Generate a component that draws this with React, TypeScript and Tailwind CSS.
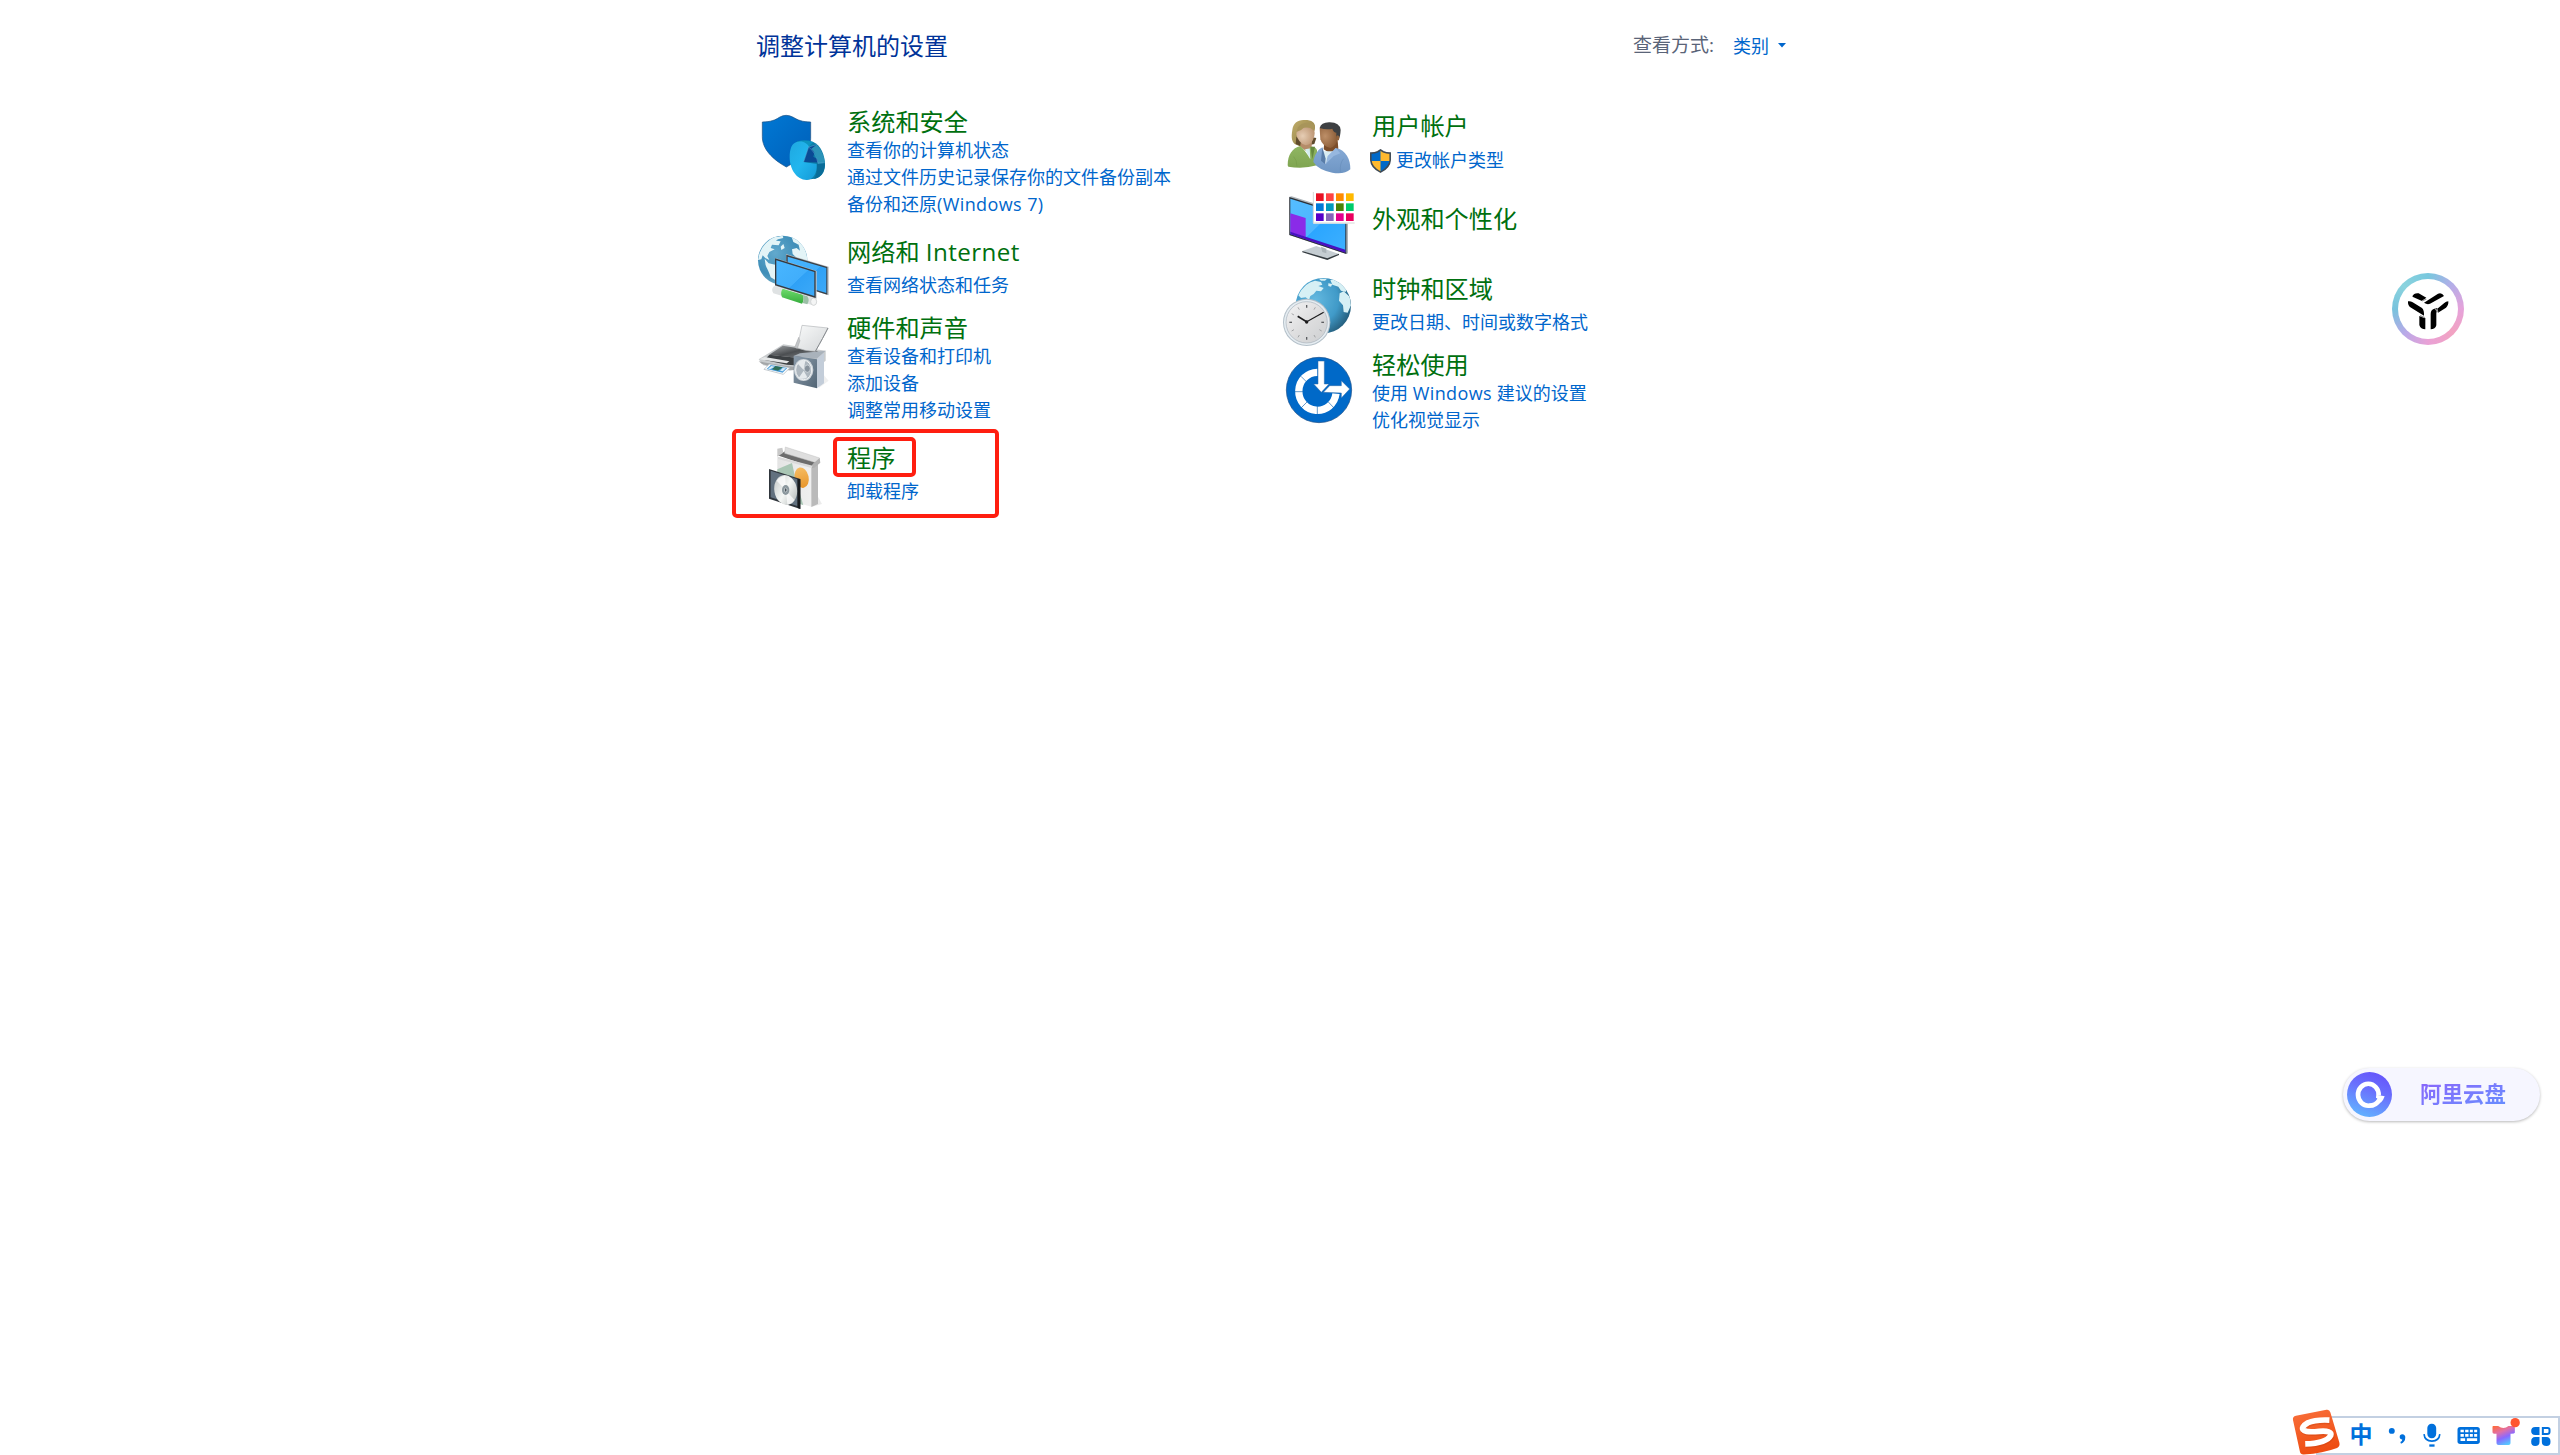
import type { ReactNode } from "react";

type IconProps = { y: number; className: string; children: ReactNode };

function Icon({ y, className, children }: IconProps) {
  return (
    <svg viewBox={`0 ${y} 270 216`} className={"h-[72px] w-[90px] shrink-0 overflow-visible " + className}>
      {children}
    </svg>
  );
}

const SecurityIcon = () => (
  <Icon y={36} className="mt-1">
    <defs>
      <linearGradient id="sh" x1="0" y1="0" x2="1" y2="1">
        <stop offset="0" stopColor="#0078d4" />
        <stop offset="1" stopColor="#005fb8" />
      </linearGradient>
      <linearGradient id="pie" x1="0" y1="0" x2="1" y2="1">
        <stop offset="0" stopColor="#1fa8e0" />
        <stop offset="0.5" stopColor="#22b6ee" />
        <stop offset="1" stopColor="#1499d6" />
      </linearGradient>
    </defs>
    <path d="M37 66C62 66 76 60 88 52Q108 40 130 52C143 60 157 66 182 66V116C182 152 150 178 109 201C68 178 37 148 37 110Z" fill="url(#sh)" stroke="#1d4f80" strokeWidth="2" />
    <path d="M140 125Q165 118 190 126C212 136 225 165 225 196C224 218 213 233 195 236L168 239L150 200Z" fill="#0d7fa8" />
    <path d="M140 125Q165 118 190 126L176 140Z" fill="#0c93c0" />
    <path d="M200 192L225 190C224 218 213 233 192 237C200 225 202 210 200 192Z" fill="#0a6c98" />
    <path d="M140 126C158 120 172 130 177 140L161 186L200 192C202 220 190 239 170 240C140 240 119 208 119 172C119 145 126 130 140 126Z" fill="url(#pie)" />
    <path d="M176 141L200 134L190 170L221 188L161 186Z" fill="#0a4a94" />
    <path d="M200 134Q220 155 225 188L204 190Q200 160 184 146Z" fill="#2b93b8" />
    <path d="M176 141Q198 158 204 190L221 188M161 186L176 141L200 134" fill="none" stroke="#5fa4d0" strokeWidth="1.5" />
  </Icon>
);

const NetworkIcon = () => (
  <Icon y={402} className="-mt-1">
    <defs>
      <radialGradient id="gl" cx="0.35" cy="0.35" r="0.75">
        <stop offset="0" stopColor="#62a9cd" />
        <stop offset="0.6" stopColor="#3f8eb8" />
        <stop offset="1" stopColor="#7eb4cb" />
      </radialGradient>
      <linearGradient id="scr" x1="0" y1="0" x2="1" y2="1">
        <stop offset="0" stopColor="#48b6ff" />
        <stop offset="0.55" stopColor="#41aefb" />
        <stop offset="0.56" stopColor="#2fa1f6" />
        <stop offset="1" stopColor="#3ca9f8" />
      </linearGradient>
      <linearGradient id="grn" x1="0" y1="0" x2="0" y2="1">
        <stop offset="0" stopColor="#6fdc6c" />
        <stop offset="1" stopColor="#35ac3c" />
      </linearGradient>
      <clipPath id="gc"><circle cx="98" cy="481" r="74" /></clipPath>
    </defs>
    <circle cx="98" cy="481" r="74" fill="url(#gl)" />
    <g clipPath="url(#gc)" fill="#e3f4f7">
      <path d="M28 462C40 430 60 416 78 410L88 414L78 422L92 424L86 436L66 434L62 444L74 448L58 456L52 468L58 480L46 474L38 466L34 478L24 480Z" />
      <path d="M66 414L98 407L100 414L84 418Z" />
      <path d="M124 408C150 418 172 446 172 484L140 474L128 462L126 448L140 444L150 452L146 434L130 426Z" />
      <path d="M44 476L56 490L76 494V540L62 532C56 510 46 500 46 490Z" />
      <path d="M92 440L100 432L104 444L94 450Z" />
    </g>
    <path d="M108 462L236 500V586L108 546Z" fill="#b7bcc0" />
    <path d="M109 464L232 501V584L109 545Z" fill="#3b4046" />
    <path d="M113 470L229 504V579L113 544Z" fill="url(#scr)" />
    <g>
      <path d="M72 558L184 592Q200 596 201 606Q199 618 188 616L70 580Q62 568 72 558Z" fill="#dfe2e3" />
      <path d="M98 566L158 584Q164 598 156 611L96 592Q90 578 98 566Z" fill="url(#grn)" />
      <path d="M158 585L172 589Q180 600 172 613L158 609Q164 598 158 585Z" fill="#9bbfa6" />
      <ellipse cx="191" cy="605" rx="9" ry="11" fill="#f4f5f5" stroke="#c8cbcc" strokeWidth="2" />
    </g>
    <path d="M75 474L200 513V596L75 558Z" fill="#c4c8cb" />
    <path d="M75 475L197 513V594L75 556Z" fill="#353a40" />
    <path d="M79 481L193 516V588L79 553Z" fill="url(#scr)" />
  </Icon>
);

const PrinterIcon = () => (
  <Icon y={30} className="mt-1.5">
    <defs>
      <linearGradient id="pp" x1="0" y1="0" x2="1" y2="1">
        <stop offset="0" stopColor="#f9fafa" />
        <stop offset="1" stopColor="#d3d6d8" />
      </linearGradient>
      <linearGradient id="pt" x1="0" y1="0" x2="1" y2="1">
        <stop offset="0" stopColor="#a3a6a9" />
        <stop offset="0.5" stopColor="#4b4e51" />
        <stop offset="1" stopColor="#8a8c8f" />
      </linearGradient>
      <linearGradient id="spk" x1="0" y1="0" x2="1" y2="1">
        <stop offset="0" stopColor="#8c9cab" />
        <stop offset="1" stopColor="#526575" />
      </linearGradient>
    </defs>
    <path d="M26 148L100 103L227 122V152L210 166L120 182L40 166Z" fill="#c9ccce" />
    <path d="M98 107L206 124L146 144L58 134Z" fill="url(#pt)" />
    <path d="M58 134L146 144L134 166L110 164L44 150Z" fill="#3c4043" />
    <path d="M28 148L44 141L118 154L110 160Z" fill="#e4e6e7" />
    <path d="M26 154L48 158L110 168L132 170V180L104 180L36 162Z" fill="#a4a7a9" />
    <path d="M58 162L120 173L100 193L42 178Z" fill="#fff" stroke="#a8b2ba" strokeWidth="2" />
    <path d="M62 165L112 174L98 188L50 177Z" fill="#4f9fdc" />
    <path d="M76 168L98 172L84 182L66 178Z" fill="#2f6f58" />
    <path d="M64 168L74 170L60 178L54 176ZM98 174L108 175L98 184L90 182Z" fill="#d6ecf8" />
    <path d="M156 46L234 54Q220 82 196 124Q166 124 136 112Q152 80 156 46Z" fill="url(#pp)" stroke="#b4b7ba" strokeWidth="2" />
    <path d="M234 54Q220 82 196 124" fill="none" stroke="#85898d" strokeWidth="3" />
    <path d="M146 82L134 112L142 116L150 92Z" fill="#c2c5c8" stroke="#999" />
    <path d="M206 235L236 212L222 196Z" fill="#000" opacity="0.06" />
    <path d="M131 138L150 130L227 122L200 146Z" fill="#a9b2bb" />
    <path d="M201 146L222 128V220L201 235Z" fill="#c3cdd9" />
    <path d="M131 137L201 148V235L131 218Z" fill="url(#spk)" />
    <ellipse cx="161" cy="180" rx="29" ry="33" fill="#cfd5da" />
    <ellipse cx="161" cy="180" rx="24" ry="29" fill="#aeb7bf" stroke="#eef1f3" strokeWidth="3" />
    <path d="M161 180L142 160Q152 148 166 152Z M161 182L146 204Q160 210 172 202Z" fill="#e6eaed" />
    <ellipse cx="172" cy="176" rx="9" ry="11" fill="#87929c" stroke="#dfe4e8" strokeWidth="2" />
  </Icon>
);

const ProgramsIcon = () => (
  <Icon y={402} className="">
    <defs>
      <linearGradient id="bx" x1="0" y1="0" x2="1" y2="0">
        <stop offset="0" stopColor="#e4e4e4" />
        <stop offset="1" stopColor="#f0f0f0" />
      </linearGradient>
      <linearGradient id="cdc" x1="0" y1="0" x2="1" y2="1">
        <stop offset="0" stopColor="#bfc4c4" />
        <stop offset="0.5" stopColor="#f5f7f5" />
        <stop offset="1" stopColor="#aab0b0" />
      </linearGradient>
      <linearGradient id="org" x1="0" y1="0" x2="0" y2="1">
        <stop offset="0" stopColor="#f6bc62" />
        <stop offset="1" stopColor="#e8962c" />
      </linearGradient>
    </defs>
    <path d="M186 590L216 582L204 560Z" fill="#000" opacity="0.08" />
    <path d="M82 440L190 470L184 590L82 560Z" fill="url(#bx)" />
    <path d="M184 470L204 462V582L184 591Z" fill="#bababa" />
    <path d="M82 436L106 424L208 460L188 472Z" fill="#6c6c6c" />
    <path d="M82 416L97 413L100 428L82 440Z" fill="#c8c8c8" />
    <path d="M106 411L209 444L198 458L104 430Z" fill="#dedede" stroke="#c2c2c2" strokeWidth="1.5" />
    <path d="M188 462L209 444L211 458L192 474L184 471Z" fill="#b0b0b0" />
    <path d="M84 440L188 467L184 474L84 447Z" fill="#dadada" />
    <path d="M82 478L126 459L136 504L160 586L120 570L82 530Z" fill="#a9c6b4" />
    <ellipse cx="155" cy="503" rx="21" ry="31" fill="url(#org)" transform="rotate(-12 155 503)" />
    <path d="M57 477L151 507V597L57 566Z" fill="#30363c" />
    <path d="M62 482L142 508V588L62 562Z" fill="#62717f" />
    <path d="M143 506L151 508V597L143 594Z" fill="#181b1e" />
    <ellipse cx="107" cy="540" rx="34" ry="45" fill="url(#cdc)" transform="rotate(-10 107 540)" />
    <path d="M107 540L80 512Q90 498 106 498Z M108 542L134 570Q126 582 112 584Z" fill="#fff" opacity="0.7" />
    <ellipse cx="107" cy="540" rx="11" ry="15" fill="#8b979d" />
    <ellipse cx="107" cy="540" rx="4" ry="6" fill="#48525a" stroke="#e3e8e8" strokeWidth="2" />
  </Icon>
);

const UsersIcon = () => (
  <Icon y={36} className="">
    <defs>
      <linearGradient id="hair" x1="0" y1="0" x2="1" y2="1">
        <stop offset="0" stopColor="#c0ad6a" />
        <stop offset="1" stopColor="#8b7a42" />
      </linearGradient>
      <radialGradient id="fa" cx="0.35" cy="0.5" r="0.7">
        <stop offset="0" stopColor="#e6cdb4" />
        <stop offset="1" stopColor="#bb9370" />
      </radialGradient>
      <radialGradient id="fb" cx="0.3" cy="0.45" r="0.8">
        <stop offset="0" stopColor="#bd8f68" />
        <stop offset="1" stopColor="#80512c" />
      </radialGradient>
      <linearGradient id="ga" x1="0" y1="0" x2="0" y2="1">
        <stop offset="0" stopColor="#90b662" />
        <stop offset="1" stopColor="#7fa551" />
      </linearGradient>
      <linearGradient id="bl" x1="0" y1="0" x2="0" y2="1">
        <stop offset="0" stopColor="#86aad6" />
        <stop offset="1" stopColor="#6f96c4" />
      </linearGradient>
    </defs>
    <path d="M64 134C50 130 48 112 52 90C54 68 70 58 90 60C110 60 122 68 120 84L116 100L78 140Z" fill="url(#hair)" />
    <path d="M64 110L80 120L76 138L62 132Z" fill="#5f4b2d" />
    <path d="M112 112L124 114L118 132L108 134Z" fill="#5f4b2d" />
    <path d="M78 120L110 124V146L92 152L76 140Z" fill="#b58c68" />
    <path d="M66 86L106 80Q122 84 118 108Q112 134 92 136Q70 128 64 104Z" fill="url(#fa)" />
    <path d="M64 96Q80 92 88 82Q104 80 118 92L120 78Q104 62 80 72Q66 80 64 96Z" fill="#a8955a" />
    <path d="M90 148L112 144V176L106 178Z" fill="#d5eef0" />
    <path d="M38 196C38 164 52 144 76 138Q90 150 106 178L104 142Q118 136 126 150V196Q84 208 40 200Z" fill="url(#ga)" />
    <path d="M106 140L112 178L116 160L120 140Z" fill="#66893f" />
    <path d="M148 126L188 122L190 146L168 162L146 148Z" fill="#7c4e2b" />
    <path d="M134 84Q160 74 186 88L190 112Q184 140 166 144Q142 138 136 118Z" fill="url(#fb)" />
    <path d="M134 84Q138 68 162 67Q194 66 197 90Q196 112 190 120L184 116V98Q176 98 172 86Q154 90 134 84Z" fill="#3e4042" />
    <ellipse cx="188" cy="114" rx="5" ry="8" fill="#91623b" />
    <path d="M144 154L176 154L150 188Z" fill="#d8edf3" />
    <path d="M115 186C118 164 130 148 142 142L152 192L182 144C214 150 227 180 226 208Q208 224 172 218Q130 210 115 186Z" fill="url(#bl)" />
    <path d="M142 142L138 182L150 192L152 176Z" fill="#587ca8" />
    <path d="M182 144L196 160L176 168L152 192L158 168Z" fill="#96b7df" />
    <path d="M196 216Q194 188 206 176" fill="none" stroke="#6288b6" strokeWidth="1.5" />
    <path d="M66 200Q66 180 56 170" fill="none" stroke="#739847" strokeWidth="1.5" />
  </Icon>
);

const SWATCHES = [
  "#e81123", "#ff4343", "#ff8c00", "#ffb900",
  "#0078d7", "#0099bc", "#498205", "#00cc6a",
  "#5600c8", "#8764b8", "#e3008c", "#ea005e",
];

const AppearanceIcon = () => (
  <Icon y={270} className="-mt-[15px]">
    <defs>
      <linearGradient id="ms" x1="0" y1="0" x2="1" y2="1">
        <stop offset="0" stopColor="#55bdff" />
        <stop offset="0.5" stopColor="#4cb6ff" />
        <stop offset="0.51" stopColor="#2ba6ff" />
        <stop offset="1" stopColor="#3eb0ff" />
      </linearGradient>
    </defs>
    <path d="M82 453L124 438L192 462L157 478Z" fill="#c5cdd2" />
    <path d="M82 453L157 475L192 461V465L157 480L82 457Z" fill="#343b40" />
    <path d="M138 440L154 446V460L142 456Z" fill="#aab3b8" />
    <path d="M43 290L50 289L219 342V460L214 462L43 405Z" fill="#aeb5ba" />
    <path d="M43 291L214 345V462L43 405Z" fill="#2c3036" />
    <path d="M46 296L211 348V457L46 402Z" fill="url(#ms)" />
    <path d="M46 340L92 354V411L46 397Z" fill="#8a2be8" />
    <path d="M46 395L211 449V458L46 403Z" fill="#4a10c0" />
    <rect x="115" y="276" width="124" height="95" fill="#fff" />
    <path d="M115 276V369H239" fill="none" stroke="#d6d6d6" strokeWidth="3" />
    {SWATCHES.map((color, i) => (
      <rect key={color} x={123 + (i % 4) * 30} y={280 + Math.floor(i / 4) * 30} width="23" height="23" fill={color} />
    ))}
  </Icon>
);

const ClockIcon = () => (
  <Icon y={27} className="">
    <defs>
      <radialGradient id="g2" cx="0.35" cy="0.4" r="0.7">
        <stop offset="0" stopColor="#64b9e0" />
        <stop offset="0.6" stopColor="#409ac8" />
        <stop offset="1" stopColor="#235a78" />
      </radialGradient>
      <linearGradient id="cf" x1="0" y1="0" x2="1" y2="1">
        <stop offset="0" stopColor="#f4f4f5" />
        <stop offset="0.5" stopColor="#dededf" />
        <stop offset="1" stopColor="#cdcfd1" />
      </linearGradient>
      <clipPath id="g2c"><circle cx="145" cy="119" r="83" /></clipPath>
    </defs>
    <circle cx="145" cy="119" r="83" fill="url(#g2)" />
    <g clipPath="url(#g2c)" fill="#d6f0f5">
      <path d="M70 88Q88 50 120 44L138 48L142 56L130 60L146 66L138 76L124 74L116 84L106 90L102 102L92 94L78 96Z" />
      <path d="M132 38L156 38L150 44L138 44Z" />
      <path d="M166 42L178 40L202 56L214 70L212 78L198 74L190 62L172 56Z" />
      <path d="M194 82L206 76L224 92L228 118L218 140L206 138L204 118L192 104Z" />
      <path d="M160 52L172 54L168 62L160 60Z" />
    </g>
    <circle cx="95" cy="169" r="71" fill="#b4c0c9" />
    <circle cx="95" cy="169" r="68" fill="#e6edf2" />
    <circle cx="95" cy="169" r="62" fill="url(#cf)" stroke="#a8b2bb" strokeWidth="2" />
    {Array.from({ length: 12 }, (_, i) => (
      <path key={i} d="M95 117V125" stroke={i % 3 ? "#8d8f92" : "#5b5d60"} strokeWidth={i % 3 ? 2 : 4} transform={`rotate(${i * 30} 95 169)`} />
    ))}
    <path d="M68 151L96 168" stroke="#1b1b1c" strokeWidth="5" />
    <path d="M94 168L146 139" stroke="#1b1b1c" strokeWidth="3.5" />
    <circle cx="95" cy="168" r="5" fill="#1b1b1c" />
  </Icon>
);

const EaseIcon = () => (
  <Icon y={267} className="mt-[3px]">
    <circle cx="132" cy="375" r="98" fill="#0069c8" stroke="#1d4f86" strokeWidth="2" />
    <path d="M127 322A56 57 0 1 0 183 386" fill="none" stroke="#fff" strokeWidth="22" />
    <path d="M58 380H84M78 334L95 351M77 430L96 411M127 424V448M178 430L160 411" stroke="#1866ae" strokeWidth="2" />
    <path d="M129 288H148V357H162L139 382L116 357H129Z" fill="#fff" stroke="#2a67a5" strokeWidth="1.5" />
    <path d="M145 382L164 362H199V347L224 372L199 399V384Z" fill="#fff" stroke="#2a67a5" strokeWidth="1.5" />
  </Icon>
);

const UacShield = () => (
  <svg viewBox="0 0 24 26" className="mr-1 h-6 w-[23px] shrink-0">
    <path d="M12 1L15 3Q18 4.500 22.500 4.500V12Q22 20 12 25Q2 20 1.500 12V4.500Q6 4.500 9 3Z" fill="#ffb92e" />
    <path d="M12 1V13H1.500V4.500Q6 4.500 9 3Z" fill="#0069c8" />
    <path d="M12 13H22.500Q22 20 12 25Z" fill="#0069c8" />
    <path d="M12 1L15 3Q18 4.500 22.500 4.500V12Q22 20 12 25Q2 20 1.500 12V4.500Q6 4.500 9 3Z" fill="none" stroke="#3f4a55" strokeWidth="1.700" />
  </svg>
);

type CategoryProps = {
  icon: ReactNode;
  title: ReactNode;
  links?: ReactNode[];
  className?: string;
  linksClass?: string;
  children?: ReactNode;
};

function Category({ icon, title, links = [], className = "", linksClass = "", children }: CategoryProps) {
  return (
    <section className={"relative flex items-start gap-[7px] " + className}>
      {icon}
      <div className="whitespace-nowrap">
        <h2 className="-mt-px mb-px text-[24.2px] leading-[29px] text-[#00700f]">{title}</h2>
        <ul className={"text-[18px] leading-[27px] text-[#0066cc] " + linksClass}>
          {links.map((link, i) => (
            <li key={i}>{link}</li>
          ))}
        </ul>
      </div>
      {children}
    </section>
  );
}

function AssistantBadge() {
  return (
    <div className="absolute top-[273px] right-24 size-[72px] rounded-full bg-[conic-gradient(from_0deg,#78c8de,#b2aee8_12%,#e6a2da_25%,#f2a3c2_37%,#e9a1d6_50%,#b9a9e8_62%,#78c3dd_75%,#8ad3de_87%,#78c8de)] p-1.5">
      <svg viewBox="174 87 180 180" className="size-full rounded-full bg-white">
        <path d="M217 139Q222 128 236 130L259 143L246 153L219 141Z" />
        <path d="M252 158L294 131Q306 127 312 138L270 161Q262 165 252 158Z" />
        <path d="M204 154Q212 153 218 157L246 174Q253 180 252 197L211 172Q203 166 204 154Z" />
        <path d="M325 154Q326 166 318 173L294 188L292 176L312 160Q318 154 325 154Z" />
        <path d="M272 238V192Q272 180 281 177L292 174L289 190V226Q286 238 272 238Z" />
        <path d="M238 198L256 204V238Q242 238 238 225Z" />
        <path d="M246 153L259 147M240 197L254 203M285 175L294 186" stroke="#999" strokeWidth="4" />
      </svg>
    </div>
  );
}

function CloudDrive() {
  return (
    <div className="absolute top-[1068px] right-5 flex h-[53px] w-[197px] items-center rounded-full bg-[#f6f6ff] pl-1 shadow-[0_1px_3px_rgba(0,0,0,0.28)]">
      <svg viewBox="51 66 135 135" className="-mt-px size-[45px]">
        <defs>
          <linearGradient id="cd" x1="0.7" y1="0" x2="0.3" y2="1">
            <stop offset="0" stopColor="#6554fb" />
            <stop offset="0.4" stopColor="#6a70fd" />
            <stop offset="1" stopColor="#62b4ff" />
          </linearGradient>
        </defs>
        <circle cx="118.500" cy="133.500" r="67.500" fill="url(#cd)" />
        <path d="M146 136A31 33 0 1 0 118 167Q138 167 148 150" fill="none" stroke="#fff" strokeWidth="14" />
        <path d="M139 134L164 139Q160 152 152 158L138 142Z" fill="#fff" />
      </svg>
      <span className="-mt-0.5 ml-[28px] bg-linear-to-br from-[#8a62fb] to-[#6290ff] bg-clip-text text-[21.500px] leading-[30px] font-bold text-transparent">
        阿里云盘
      </span>
    </div>
  );
}

function ImeBar() {
  return (
    <div className="absolute right-0 bottom-0 flex h-[60px] w-[280px] items-end">
      <div className="ml-9 flex h-[39px] flex-1 items-center border-2 border-[#c3d0e2] bg-white">
        <svg viewBox="36 40 148 144" className="-mt-2 -ml-[26px] h-12 w-[49px] shrink-0">
          <defs>
            <linearGradient id="so" x1="0" y1="0" x2="0.300" y2="1">
              <stop offset="0" stopColor="#f9703c" />
              <stop offset="1" stopColor="#ee4d12" />
            </linearGradient>
          </defs>
          <path d="M48 63L140 45Q149 43 152 53L179 144Q182 156 172 160Q130 176 72 180Q62 181 60 172L39 76Q37 65 48 63Z" fill="url(#so)" />
          <path d="M149 76Q106 74 84 84Q60 98 72 107Q82 114 118 110Q158 107 153 122Q140 146 76 148" fill="none" stroke="#c43c0c" strokeWidth="18" opacity="0.35" transform="translate(2 4)" />
          <path d="M149 76Q106 74 84 84Q60 98 72 107Q82 114 118 110Q158 107 153 122Q140 146 76 148" fill="none" stroke="#fff" strokeWidth="17" />
        </svg>
        <span className="-mt-1 ml-2 w-6 text-center text-[23px] leading-6 font-bold text-[#0070dc]">中</span>
        <svg viewBox="320 84 240 76" className="ml-[13px] h-[25px] w-20 shrink-0 overflow-visible">
          <g fill="#0070dc">
            <circle cx="336" cy="108" r="9" />
            <path d="M368 118A9 9 0 0 1 377 128Q377 142 364 147L362 142Q368 139 368 134A8 8 0 0 1 368 118Z" />
            <rect x="444" y="86" width="27" height="44" rx="13" />
            <path d="M450 149H466V156H450Z" />
          </g>
          <path d="M434 118Q436 139 458 139Q480 139 482 118" fill="none" stroke="#0070dc" strokeWidth="5" />
        </svg>
        <svg viewBox="530 66 290 96" className="-mt-[5px] -ml-[10px] h-8 w-[97px] shrink-0 overflow-visible">
          <defs>
            <linearGradient id="ts" x1="0.100" y1="0" x2="0.600" y2="1">
              <stop offset="0" stopColor="#ff6a3c" />
              <stop offset="0.350" stopColor="#e070a8" />
              <stop offset="0.650" stopColor="#8a68ff" />
              <stop offset="1" stopColor="#55c8ff" />
            </linearGradient>
          </defs>
          <rect x="534" y="96" width="67" height="51" rx="8" fill="#0070dc" />
          <path d="M543 104h10v8h-10zM557 104h10v8h-10zM571 104h9v8h-9zM584 104h9v8h-9zM543 117h10v8h-10zM557 117h10v8h-10zM571 117h9v8h-9zM584 117h9v8h-9zM543 130h14v8h-14zM562 130h31v8h-31z" fill="#fff" />
          <path d="M641 93H656Q672 105 687 93H703Q706 94 706 98V113Q705 116 696 116H693V145Q693 150 687 150H657Q651 150 651 145V116H644Q639 116 639 112V97Q639 93 641 93Z" fill="url(#ts)" />
          <circle cx="707" cy="83" r="14" fill="#ff5630" />
          <path d="M767 96H780V120H767Q755 120 755 108Q755 96 767 96ZM767 126H780V141Q780 153 767 153Q755 153 755 140Q755 126 767 126ZM787 126H801Q813 126 813 140Q813 153 801 153Q787 153 787 141Z" fill="#0070dc" />
          <path d="M790 99H805Q810 99 810 104V111Q810 117 803 117H790Z" fill="none" stroke="#0070dc" strokeWidth="6" />
        </svg>
      </div>
    </div>
  );
}

export default function App() {
  return (
    <div className="relative h-[1455px] w-[2560px] overflow-hidden bg-white font-['Open_Sans','Noto_Sans_CJK_SC',sans-serif]">
      <header className="flex h-[91px] items-center justify-between pr-[774px] pl-[756px]">
        <h1 className="text-2xl leading-8 text-[#003399]">调整计算机的设置</h1>
        <div className="flex items-center leading-7">
          <span className="-mt-0.5 text-[19px] text-[#5a6478]">查看方式:</span>
          <a className="ml-[19px] text-[18px] text-[#0066cc]">类别</a>
          <svg viewBox="0 0 8 5" className="ml-[9px] h-[5px] w-2">
            <path d="M0 0H8L4 4.500Z" fill="#0066cc" />
          </svg>
        </div>
      </header>

      <main className="grid grid-cols-[525px_525px] pl-[750px]">
        <div className="pt-[17px]">
          <Category
            className="h-[130px]"
            icon={<SecurityIcon />}
            title="系统和安全"
            links={[
              "查看你的计算机状态",
              "通过文件历史记录保存你的文件备份副本",
              <>备份和还原<span className="tracking-[0.4px]">(Windows 7)</span></>,
            ]}
          />
          <Category
            className="h-[76px]"
            linksClass="pt-[5px]"
            icon={<NetworkIcon />}
            title={<>网络和 <span className="tracking-[0.4px]">Internet</span></>}
            links={["查看网络状态和任务"]}
          />
          <Category
            className="h-[130px]"
            icon={<PrinterIcon />}
            title="硬件和声音"
            links={["查看设备和打印机", "添加设备", "调整常用移动设置"]}
          />
          <Category className="h-[76px]" linksClass="pt-[5px]" icon={<ProgramsIcon />} title="程序" links={["卸载程序"]}>
            <div className="absolute -top-[15px] -left-[18px] h-[89px] w-[267px] rounded-[5px] border-4 border-[#ff1e10]" />
            <div className="absolute -top-[7px] left-[83px] h-10 w-[83px] rounded-[5px] border-4 border-[#ff1e10]" />
          </Category>
        </div>

        <div className="pt-[21px]">
          <Category
            className="h-[93px]"
            linksClass="pt-[6px]"
            icon={<UsersIcon />}
            title="用户帐户"
            links={[<span key="uac" className="-ml-[3px] flex items-center"><UacShield />更改帐户类型</span>]}
          />
          <Category className="h-[70px]" icon={<AppearanceIcon />} title="外观和个性化" />
          <Category className="h-[76px]" linksClass="pt-[5px]" icon={<ClockIcon />} title="时钟和区域" links={["更改日期、时间或数字格式"]} />
          <Category
            className="h-[110px]"
            icon={<EaseIcon />}
            title="轻松使用"
            links={[<>使用 <span className="tracking-[0.4px]">Windows</span> 建议的设置</>, "优化视觉显示"]}
          />
        </div>
      </main>

      <AssistantBadge />
      <CloudDrive />
      <ImeBar />
    </div>
  );
}
